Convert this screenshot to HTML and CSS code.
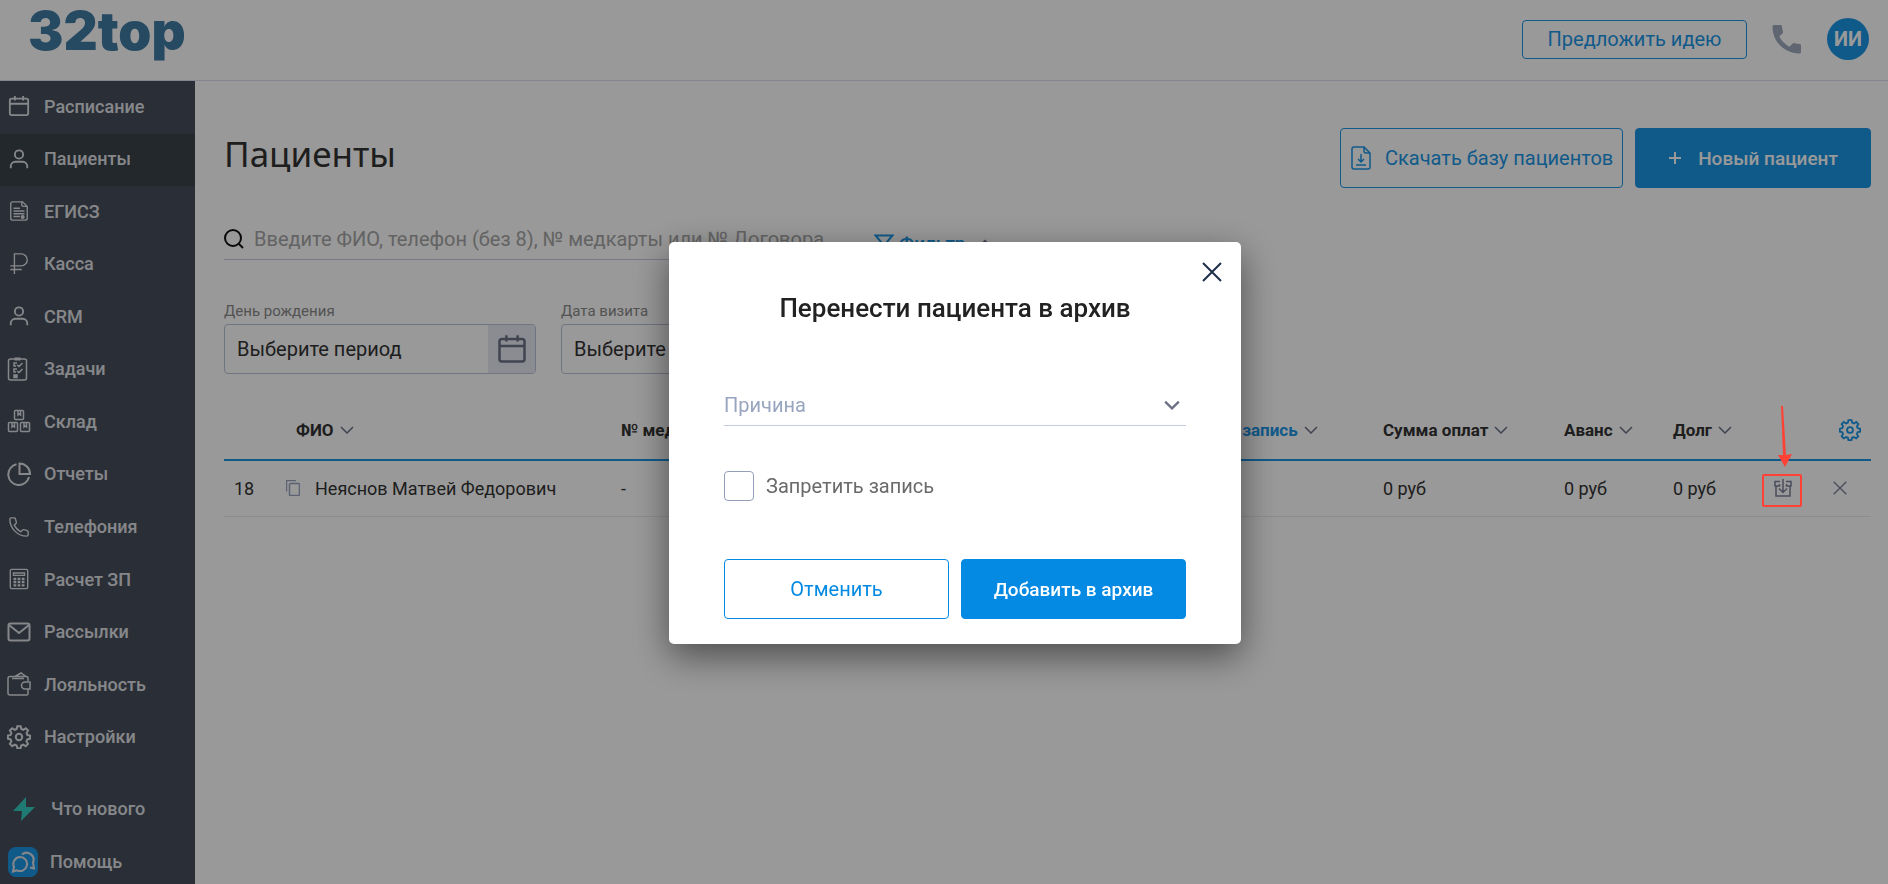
FILE: index.html
```html
<!DOCTYPE html>
<html lang="ru">
<head>
    <meta charset="UTF-8">
    <meta name="viewport" content="width=device-width, initial-scale=1.0">
    <title>32top - Пациенты</title>
    <link rel="stylesheet" href="styles.css">
</head>
<body>
    <svg class="sprite" aria-hidden="true">
        <symbol id="i-calendar" viewBox="0 0 24 24"><rect x="2" y="4" width="20" height="18" rx="2"/><path d="M2 9.500h20M7.500 1v5M16.500 1v5"/></symbol>
        <symbol id="i-user" viewBox="0 0 24 24"><circle cx="12" cy="7" r="4.5"/><path d="M3 22v-2a5 5 0 0 1 5-5h8a5 5 0 0 1 5 5v2"/></symbol>
        <symbol id="i-down" viewBox="0 0 14 8"><path d="M1 1l6 6 6-6"/></symbol>
        <symbol id="i-close" viewBox="0 0 20 20"><path d="M1 1l18 18M19 1L1 19"/></symbol>
        <symbol id="i-gear" viewBox="0 0 24 24"><circle cx="12" cy="12" r="3.2"/><path d="M10.3 1.2h3.4l.6 2.8 2 .8 2.5-1.6 2.3 2.3-1.5 2.6.8 2 2.6.5v3.2l-2.7.6-.8 2 1.5 2.5-2.3 2.3-2.5-1.5-2 .8-.6 2.7h-3.3l-.6-2.7-2-.8-2.500 1.500-2.300-2.300L4.400 16.400l-.8-2L.9 13.800v-3.200l2.700-.6.8-2L2.900 5.500l2.300-2.300 2.500 1.600 2-.8z"/></symbol>
    </svg>

    <header class="header">
        <a class="logo" href="#">32top</a>
        <div class="header-tools">
            <button class="btn btn-idea" type="button">Предложить идею</button>
            <button class="icon-btn call" type="button" aria-label="Позвонить">
                <svg width="30" height="30" viewBox="0 0 30 30"><path d="M2 1h6.500a1.500 1.500 0 0 1 1.500 1.400c.1 2 .4 3.700 1 5.300.2.600 0 1.200-.4 1.600L7.300 12.500a23 23 0 0 0 10.200 10.200l3.200-3.300c.4-.4 1-.6 1.600-.4 1.700.6 3.400.9 5.300 1 .8 0 1.400.7 1.400 1.500V28c0 .8-.6 1.500-1.500 1.500C12.300 29.500.5 17.700.5 2.500.5 1.700 1.200 1 2 1z"/></svg>
            </button>
            <button class="avatar" type="button">ИИ</button>
        </div>
    </header>

    <div class="layout">
        <nav class="sidebar">
            <ul class="menu">
                <li><a href="#"><svg><use href="#i-calendar"/></svg>Расписание</a></li>
                <li><a href="#" class="active"><svg><use href="#i-user"/></svg>Пациенты</a></li>
                <li><a href="#"><svg class="thin" viewBox="0 0 24 24"><path d="M5 2h11l5 5v13a2 2 0 0 1-2 2H5a2 2 0 0 1-2-2V4a2 2 0 0 1 2-2zM15 2v3a2 2 0 0 0 2 2h4M6 9h7M6 12h12M6 15h12M6 18h7"/><circle cx="16" cy="18.500" r="1.500" fill="currentColor"/></svg>ЕГИСЗ</a></li>
                <li><a href="#"><svg class="thin" viewBox="0 0 24 24"><path d="M7 23V1h7.500a6.500 6.500 0 0 1 0 13H2.500M2.500 18H15"/></svg>Касса</a></li>
                <li><a href="#"><svg><use href="#i-user"/></svg>CRM</a></li>
                <li><a href="#"><svg class="wide thin" viewBox="0 0 24 24"><rect x="1.500" y="2" width="18" height="21" rx="2"/><path d="M7.500 2h6" stroke-width="3"/><path d="M10 6H7v3h2M10 8l2 1.500L15.500 6M10 12H7v3h2M10 14l2 1.500 3.500-3.500"/><path d="M7 18h3v2.500H7z" fill="currentColor"/></svg>Задачи</a></li>
                <li><a href="#"><svg class="wide thin" viewBox="0 0 24 24"><rect x="7.500" y="1.500" width="9" height="9" rx="1"/><rect x="1.500" y="13.500" width="9" height="9" rx="1"/><rect x="13.500" y="13.500" width="9" height="9" rx="1"/><path d="M11 2v4l1-1 1.500 1V2M5 14v4l1-1 1.500 1v-4M17 14v4l1-1 1.500 1v-4"/></svg>Склад</a></li>
                <li><a href="#"><svg class="wide" viewBox="0 0 24 24"><path d="M9.500 2.300A10.500 10.500 0 1 0 22 15M12.500 1.500V12H23A10.500 10.500 0 0 0 12.500 1.500z"/></svg>Отчеты</a></li>
                <li><a href="#"><svg class="thin" viewBox="0 0 24 24"><path d="M2 3.500C2 2.500 2.500 2 3.500 2h3.200c.7 0 1.200.5 1.400 1.100l1 3.500c.2.600 0 1.200-.4 1.600L6.800 10a16 16 0 0 0 7.200 7.200l1.900-1.900c.4-.4 1-.6 1.600-.4l3.400 1c.7.2 1.100.7 1.100 1.400v3.200c0 1-.5 1.500-1.500 1.500C10.500 22 2 13.500 2 3.500z"/></svg>Телефония</a></li>
                <li><a href="#"><svg class="thin" viewBox="0 0 24 24"><rect x="2.500" y="1.500" width="19" height="21" rx="1.500"/><path d="M6 5.500h12v2.500H6z"/><path d="M6 12h3M10.500 12h3M15 12h3M6 15.500h3M10.500 15.500h3M15 15.500h3M6 19h3M10.500 19h3M15 19h3" stroke-width="2.500"/></svg>Расчет ЗП</a></li>
                <li><a href="#"><svg class="wide" viewBox="0 0 24 24"><rect x="1.500" y="3.500" width="21" height="17" rx="2"/><path d="M2 5l10 8L22 5"/></svg>Рассылки</a></li>
                <li><a href="#"><svg class="wide thin" viewBox="0 0 24 24"><path d="M21 9V6a1.500 1.500 0 0 0-1.500-1.500H3A2 2 0 0 0 1 6.500V21a2 2 0 0 0 2 2h16.500a1.500 1.500 0 0 0 1.500-1.500V17M23 10h-5a3.500 3.500 0 0 0 0 7h5zM5 6.500h12M8 4.500L14 1l5 3.500"/></svg>Лояльность</a></li>
                <li><a href="#"><svg class="wide"><use href="#i-gear"/></svg>Настройки</a></li>
            </ul>
            <ul class="menu-extra">
                <li><a href="#"><svg class="bolt" viewBox="0 0 24 26"><path d="M14 1L1 15h9L9 25l14-14h-9z"/></svg>Что нового</a></li>
                <li><a href="#"><span class="help-icon"><svg viewBox="0 0 24 24"><path d="M9 7a7 7 0 1 1-3 13.300L2 21.500l1-4.500A7 7 0 0 1 9 7zM11 4.500a7 7 0 0 1 11 8l1 6-4-1"/></svg></span>Помощь</a></li>
            </ul>
        </nav>

        <main class="content">
            <div class="page-head">
                <h1>Пациенты</h1>
                <div class="page-actions">
                    <button class="btn btn-download" type="button">
                        <svg width="20" height="24" viewBox="0 0 20 24"><path d="M3 1h10l6 6v14a2 2 0 0 1-2 2H3a2 2 0 0 1-2-2V3a2 2 0 0 1 2-2zM13 1v4a2 2 0 0 0 2 2h4M10 8v8M7 13l3 3 3-3M5 19h10"/></svg>
                        Скачать базу пациентов
                    </button>
                    <button class="btn btn-primary btn-new" type="button">
                        <svg width="14" height="14" viewBox="0 0 14 14"><path d="M7 1v12M1 7h12"/></svg>
                        Новый пациент
                    </button>
                </div>
            </div>

            <div class="search-row">
                <label class="search">
                    <svg width="20" height="20" viewBox="0 0 20 20"><circle cx="9" cy="9" r="8"/><path d="M14.500 14.500L19 19"/></svg>
                    <input type="text" aria-label="Поиск пациента" placeholder="Введите ФИО, телефон (без 8), № медкарты или № Договора">
                </label>
                <button class="filter" type="button">
                    <svg width="20" height="18" viewBox="0 0 20 18"><path d="M1.500 1.500h17L12 9v7l-4-2V9z"/></svg>
                    Фильтр
                    <svg class="caret" width="12" height="8" viewBox="0 0 12 8"><path d="M1 7l5-5 5 5"/></svg>
                </button>
            </div>

            <div class="dates">
                <div class="field">
                    <label for="birthday">День рождения</label>
                    <div class="period">
                        <input id="birthday" type="text" value="Выберите период" readonly>
                        <button type="button" aria-label="Календарь"><svg><use href="#i-calendar"/></svg></button>
                    </div>
                </div>
                <div class="field">
                    <label for="visit">Дата визита</label>
                    <div class="period">
                        <input id="visit" type="text" value="Выберите период" readonly>
                        <button type="button" aria-label="Календарь"><svg><use href="#i-calendar"/></svg></button>
                    </div>
                </div>
            </div>

            <table class="patients">
                <colgroup>
                    <col class="c-num"><col class="c-name"><col class="c-card"><col>
                    <col class="c-next"><col class="c-sum"><col class="c-advance"><col class="c-debt">
                    <col class="c-archive"><col class="c-remove">
                </colgroup>
                <thead>
                    <tr>
                        <th></th>
                        <th class="name-head"><button type="button">ФИО <svg><use href="#i-down"/></svg></button></th>
                        <th><button type="button">№ медкарты <svg><use href="#i-down"/></svg></button></th>
                        <th></th>
                        <th class="sorted"><button type="button">Следующая запись <svg><use href="#i-down"/></svg></button></th>
                        <th><button type="button">Сумма оплат <svg><use href="#i-down"/></svg></button></th>
                        <th><button type="button">Аванс <svg><use href="#i-down"/></svg></button></th>
                        <th><button type="button">Долг <svg><use href="#i-down"/></svg></button></th>
                        <th></th>
                        <th class="settings"><button type="button" aria-label="Настройки таблицы"><svg><use href="#i-gear"/></svg></button></th>
                    </tr>
                </thead>
                <tbody>
                    <tr>
                        <td class="num">18</td>
                        <td>
                            <div class="name">
                                <button class="icon-btn copy" type="button" aria-label="Копировать"><svg width="14" height="16" viewBox="0 0 14 16"><path d="M.5 11.500v-11h9.500"/><rect x="3.500" y="3.500" width="10" height="12" rx="1"/></svg></button>
                                Неяснов Матвей Федорович
                            </div>
                        </td>
                        <td>-</td>
                        <td></td>
                        <td></td>
                        <td>0 руб</td>
                        <td>0 руб</td>
                        <td>0 руб</td>
                        <td class="action"><button class="icon-btn archive" type="button" aria-label="В архив"><svg width="18" height="18" viewBox="0 0 18 18"><path d="M6 2.500H1v4.500h4.500V5M12 2.500h5v4.500h-4.500V5M2 7v10h14V7M9 0v13M5 9.500l4 4 4-4"/></svg></button></td>
                        <td class="action"><button class="icon-btn remove" type="button" aria-label="Удалить"><svg width="14" height="14"><use href="#i-close"/></svg></button></td>
                    </tr>
                </tbody>
            </table>
        </main>
    </div>

    <div class="overlay">
        <form class="modal" role="dialog" aria-labelledby="modal-title">
            <button class="icon-btn modal-close" type="button" aria-label="Закрыть"><svg width="20" height="20"><use href="#i-close"/></svg></button>
            <h2 id="modal-title">Перенести пациента в архив</h2>
            <div class="reason">
                <select aria-label="Причина">
                    <option>Причина</option>
                </select>
                <svg width="16" height="10"><use href="#i-down"/></svg>
            </div>
            <label class="check"><input type="checkbox">Запретить запись</label>
            <div class="modal-actions">
                <button class="btn" type="button">Отменить</button>
                <button class="btn btn-primary" type="submit">Добавить в архив</button>
            </div>
        </form>
    </div>

    <!-- hint that points to the archive button -->
    <svg class="hint" width="44" height="104" viewBox="0 0 44 104">
        <path d="M21 1h2l3 49 6-1-7 13-7-12 5 0z"/>
        <rect x="3" y="70" width="38" height="31" rx="1"/>
    </svg>
</body>
</html>
```

FILE: styles.css
```css
* { box-sizing: border-box; }
body { margin: 0; height: 100vh; display: flex; flex-direction: column; overflow: hidden; background: #fff; color: #333; font-family: Roboto, sans-serif; font-size: 18px; }
button, input, select { font-family: inherit; font-size: inherit; color: inherit; }
button { padding: 0; border: 0; background: none; cursor: pointer; }
a { color: inherit; text-decoration: none; }
ul { margin: 0; padding: 0; list-style: none; }
svg { flex: none; fill: none; stroke: currentColor; stroke-width: 2; }
.sprite { position: absolute; width: 0; height: 0; }

.btn { border: 1px solid #1c96e7; border-radius: 4px; color: #1c96e7; font-size: 20px; }
.btn-primary { background: #1c96e7; color: #fff; font-size: 19px; font-weight: 500; }
.icon-btn { display: flex; }

/* header */
.header { display: flex; justify-content: space-between; flex: none; height: 81px; padding: 0 19px 2px 28px; border-bottom: 1px solid #dde2ee; }
.logo { color: #417ca6; font-family: Inter, sans-serif; font-size: 53px; font-weight: 900; line-height: 62px; }
.header-tools { display: flex; align-items: center; gap: 25px; }
.btn-idea { width: 225px; height: 39px; }
.call { color: #a0a8be; }
.call svg { fill: currentColor; stroke: none; }
.avatar { width: 42px; height: 42px; border-radius: 50%; background: #1c96e7; color: #fff; font-size: 20px; font-weight: 700; }

.layout { display: flex; flex: 1; min-height: 0; }

/* sidebar */
.sidebar { display: flex; flex-direction: column; flex: none; width: 195px; background: #464d5a; color: #e0e2e6; font-weight: 500; overflow: hidden; }
.sidebar svg { width: 22px; height: 22px; }
.sidebar svg.wide { width: 24px; height: 24px; margin: 0 -1px; }
.sidebar svg.thin { stroke-width: 1.5; }
.menu { display: flex; flex-direction: column; flex: 1; }
.menu li { flex: 1; }
.menu a { display: flex; align-items: center; gap: 14px; height: 100%; padding: 0 0 2px 8px; }
.menu a.active { background: #3a4348; }
.menu-extra { padding-top: 18px; margin-bottom: -4px; }
.menu-extra a { display: flex; align-items: center; gap: 12px; height: 53px; padding-left: 8px; }
.sidebar .bolt { width: 24px; height: 26px; margin: 0 3px 0 4px; fill: #35cbc0; stroke: none; }
.help-icon { display: flex; padding: 3px; border-radius: 8px; background: #1c96e7; }
.help-icon svg { width: 24px; height: 24px; }

/* page */
.content { flex: 1; min-width: 0; padding: 47px 17px 0 29px; }
.page-head { display: flex; justify-content: space-between; }
.page-head h1 { margin: 0; font-family: "Noto Sans", sans-serif; font-size: 35px; font-weight: 400; line-height: 52px; }
.page-actions { display: flex; gap: 12px; }
.page-actions .btn { display: flex; align-items: center; height: 60px; }
.btn-download { width: 283px; padding-left: 10px; gap: 14px; white-space: nowrap; }
.btn-download svg { stroke-width: 1.5; }
.btn-new { width: 236px; justify-content: center; gap: 16px; }

.search-row { display: flex; align-items: flex-start; gap: 30px; margin-top: 30px; }
.search { display: flex; align-items: center; gap: 10px; width: 620px; height: 42px; border-bottom: 1px solid #c3cbde; color: #111; }
.search input { flex: 1; border: 0; outline: 0; padding: 0; background: none; font-size: 20px; }
.search input::placeholder { color: #a6a6a6; }
.filter { display: flex; align-items: center; gap: 5px; height: 50px; color: #1c96e7; font-size: 19px; font-weight: 500; }
.filter .caret { margin-left: 8px; color: #6c7185; }

.dates { display: flex; gap: 25px; margin-top: 34px; }
.field label { display: block; margin-bottom: 3px; color: #8a8a8a; font-size: 15px; line-height: 19px; }
.period { display: flex; width: 312px; height: 50px; border: 1px solid #b9c3d8; border-radius: 4px; overflow: hidden; }
.period input { flex: 1; min-width: 0; border: 0; outline: 0; padding: 0 12px; background: none; font-size: 20px; }
.period button { display: flex; align-items: center; justify-content: center; width: 47px; background: #e8eaf3; color: #6c7185; }
.period svg { width: 30px; height: 30px; }

/* patients table */
.patients { width: 100%; margin-top: 27px; border-collapse: collapse; table-layout: fixed; }
.patients th, .patients td { padding: 0; text-align: left; white-space: nowrap; }
.patients th { height: 59px; border-bottom: 2px solid #1c96e7; }
.patients td { height: 56px; border-bottom: 1px solid #ebebef; }
.patients th button { display: flex; align-items: center; gap: 6px; font-size: 17px; font-weight: 700; }
.patients th svg { width: 14px; height: 8px; color: #6c7185; stroke-width: 1.5; }
.patients th.name-head { padding-left: 10px; }
.patients th.sorted button { color: #1c96e7; }
.patients th.settings button { margin: 0 10px 0 auto; color: #1c96e7; }
.patients th.settings svg { width: 22px; height: 22px; color: inherit; stroke-width: 2; }
.patients td.num { padding-left: 10px; }
.patients .name { display: flex; align-items: center; gap: 15px; }
.patients .action .icon-btn { margin: 0 auto; }
.c-num { width: 62px; }
.c-name { width: 335px; }
.c-card { width: 180px; }
.c-next { width: 242px; }
.c-sum { width: 181px; }
.c-advance { width: 109px; }
.c-debt { width: 85px; }
.c-archive { width: 50px; }
.c-remove { width: 63px; }
.copy { color: #98a3c0; }
.copy svg { stroke-width: 1.5; }
.archive, .remove { color: #7c839b; }
.archive svg { stroke-width: 1.5; }

/* modal */
.overlay { position: fixed; inset: 0; display: flex; align-items: center; justify-content: center; padding: 2px 0 0 22px; background: rgba(0, 0, 0, .4); }
.modal { position: relative; width: 572px; padding: 51px 55px 25px; border-radius: 5px; background: #fff; box-shadow: 0 12px 36px rgba(0, 0, 0, .5); }
.modal-close { position: absolute; top: 20px; right: 19px; color: #1f2f48; }
.modal-close svg { stroke-width: 2; }
.modal h2 { margin: 0; color: #222; font-size: 26px; font-weight: 500; line-height: 30px; text-align: center; white-space: nowrap; }
.reason { display: flex; align-items: center; height: 42px; margin-top: 61px; padding-right: 6px; border-bottom: 1px solid #c3cbde; color: #6c7185; }
.reason select { flex: 1; appearance: none; border: 0; outline: 0; padding: 0; background: none; color: #98a5bf; font-size: 20px; }
.check { display: flex; align-items: center; gap: 12px; margin-top: 45px; color: #6a6a6a; font-size: 20px; line-height: 30px; }
.check input { appearance: none; width: 30px; height: 30px; margin: 0; border: 1px solid #94a0bb; border-radius: 4px; background: #fff; }
.modal-actions { display: flex; gap: 12px; margin-top: 58px; }
.modal-actions .btn { flex: 1; height: 60px; border-color: #048ae2; }
.modal-actions .btn:not(.btn-primary) { color: #048ae2; }
.modal-actions .btn-primary { background: #048ae2; }

.hint { position: absolute; top: 405px; right: 84px; color: #ff4136; }
.hint path { fill: currentColor; stroke: none; }
```
